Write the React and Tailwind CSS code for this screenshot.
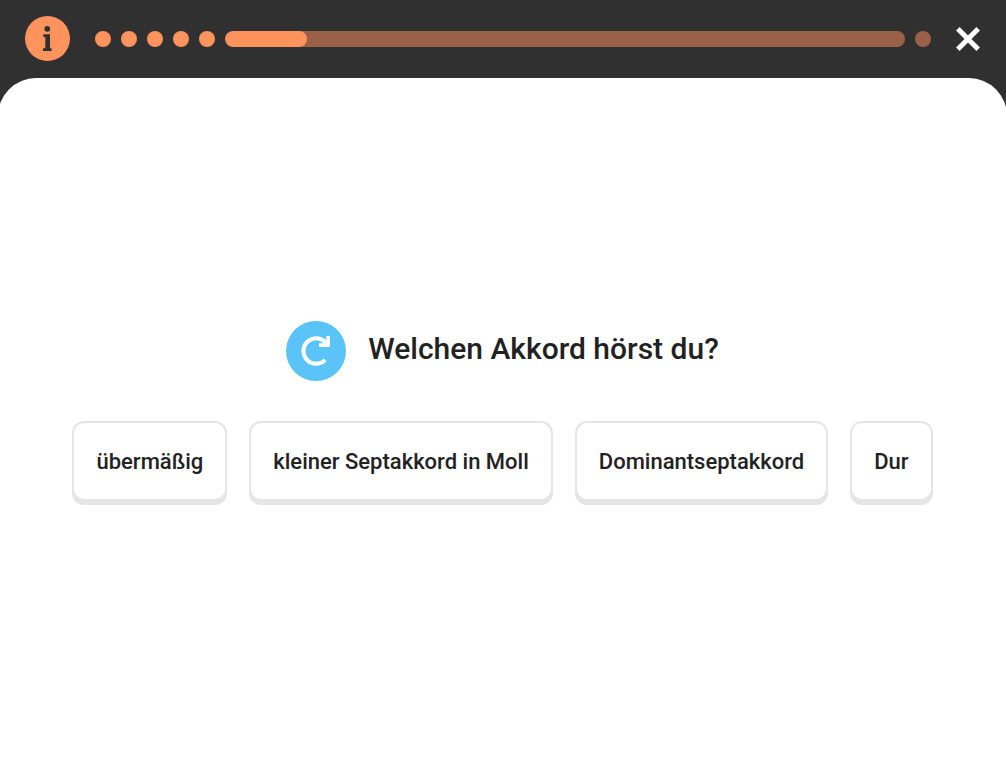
import { useState } from 'react'

const STEPS_DONE = 5
const STEPS_LEFT = 1

const answers = ['übermäßig', 'kleiner Septakkord in Moll', 'Dominantseptakkord', 'Dur']

function InfoIcon() {
  return (
    <svg viewBox="0 0 45 45" className="h-[45px] w-[45px]" aria-hidden="true">
      <circle cx="22.5" cy="22.5" r="22.5" fill="#ff935d" />
      <circle cx="22.3" cy="12.8" r="2.9" fill="#303030" />
      <path d="M18.3 18.2H25V32.2H26.6V35H18V32.2H20.3V20.9H18.3Z" fill="#303030" />
    </svg>
  )
}

function CloseIcon() {
  return (
    <svg viewBox="0 0 24 24" className="h-6 w-6" aria-hidden="true">
      <path d="M1.8 1.8L22.2 22.2M22.2 1.8L1.8 22.2" stroke="#fff" strokeWidth="5" fill="none" />
    </svg>
  )
}

function ReplayIcon() {
  return (
    <svg viewBox="0 0 60 60" className="h-[60px] w-[60px]" aria-hidden="true">
      <circle cx="30" cy="30" r="30" fill="#5ac3f8" />
      <path d="M41 23.4A12.7 12.7 0 1 0 39.2 38.9" stroke="#fff" strokeWidth="4.2" fill="none" />
      <path d="M40.3 15H44V26H33V22.2H40.3Z" fill="#fff" />
    </svg>
  )
}

function Progress({ value }) {
  return (
    <div className="flex flex-1 items-center gap-2.5">
      {Array.from({ length: STEPS_DONE }, (_, i) => (
        <span key={i} className="h-4 w-4 rounded-full bg-[#ff935d]" />
      ))}
      <div
        role="progressbar"
        aria-label="Fortschritt"
        aria-valuenow={value}
        aria-valuemin={0}
        aria-valuemax={100}
        className="h-4 flex-1 overflow-hidden rounded-full bg-[#9a6148]"
      >
        <div className="h-full rounded-full bg-[#ff935d]" style={{ width: `${value}%` }} />
      </div>
      {Array.from({ length: STEPS_LEFT }, (_, i) => (
        <span key={i} className="h-4 w-4 rounded-full bg-[#9a6148]" />
      ))}
    </div>
  )
}

export default function App() {
  const [selected, setSelected] = useState(null)

  return (
    <div className="flex min-h-screen flex-col overflow-hidden bg-[#303030] font-['Roboto',sans-serif] text-[#222222]">
      <header className="flex items-center gap-[25px] pt-4 pr-[26px] pb-[17px] pl-[25px]">
        <button type="button" aria-label="Info">
          <InfoIcon />
        </button>
        <Progress value={12} />
        <button type="button" aria-label="Schließen">
          <CloseIcon />
        </button>
      </header>

      <main className="-mr-px -ml-0.5 flex flex-1 flex-col items-center justify-center gap-10 rounded-t-[38px] bg-white px-6 pb-[21px]">
        <div className="flex items-center gap-[22px]">
          <button type="button" aria-label="Akkord wiederholen">
            <ReplayIcon />
          </button>
          <h1 className="pb-1 text-[30px] leading-9 font-medium">Welchen Akkord hörst du?</h1>
        </div>

        <div className="flex flex-wrap justify-center gap-[22px]">
          {answers.map(answer => (
            <button
              key={answer}
              type="button"
              aria-pressed={selected === answer}
              onClick={() => setSelected(answer)}
              className="h-20 rounded-xl border-2 border-[#e5e5e5] bg-white px-[22px] text-[22px] font-medium shadow-[0_4px_0_#e5e5e5]"
            >
              {answer}
            </button>
          ))}
        </div>
      </main>
    </div>
  )
}
